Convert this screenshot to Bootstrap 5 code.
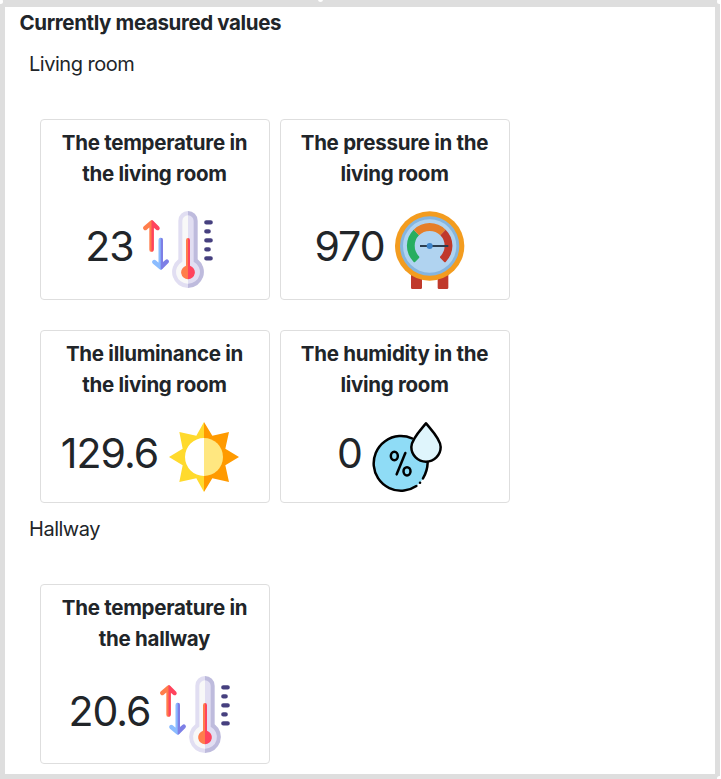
<!DOCTYPE html>
<html lang="en">
<head>
<meta charset="utf-8">
<meta name="viewport" content="width=device-width, initial-scale=1">
<title>Currently measured values</title>
<link href="https://cdn.jsdelivr.net/npm/bootstrap@5.3.0/dist/css/bootstrap.min.css" rel="stylesheet">
<style>
html, body { height: 100%; overflow: hidden; }
body { font-family: Inter, "Liberation Sans", sans-serif; font-size: 20px; line-height: 31px; color: #212529; background: #fff; }
.panel-frame { width: 720px; height: 779px; border: 5px solid #dedede; border-top-width: 7px; position: relative; padding: 0 0 0 15px; }
.handle { position: absolute; width: 5px; height: 5px; border-radius: 50%; background: #fff; }
.handle-tl { left: -7px; top: -8px; }
.handle-tc { left: 313px; top: -10px; }
.handle-tr { right: -7px; top: -8px; }
.handle-br { right: -7px; bottom: -7px; }
.panel-title { font-size: 20.5px; line-height: 31px; letter-spacing: -.37px; margin-left: -.5px; }
.room-name { font-size: 20px; line-height: 31px; margin: 11px 0 0 9px; letter-spacing: -.48px; }
.room-cards { margin: 39px 0 0 20px; column-gap: 10px; row-gap: 30px; }
.sensor { width: 230px; border-color: #dedede; border-radius: 4px; padding-top: 7px; }
.sensor-tall { height: 181px; }
.sensor-short { height: 173px; }
.sensor-last { height: 180px; }
.sensor-title { font-size: 20.5px; line-height: 31px; letter-spacing: -.28px; padding-right: 1px; }
.reading { margin-top: 22px; gap: 11px; padding-right: 10px; }
.reading-value { font-size: 41px; line-height: 70px; letter-spacing: -1px; }
.sensor-short .reading-value { line-height: 62px; }
.icon-thermometer { margin: 0 2px 0 -2px; }
.icon-gauge, .icon-humidity { margin: 0 1px 0 -1px; }
</style>
</head>
<body>
<svg width="0" height="0" class="position-absolute" aria-hidden="true">
  <symbol id="thermometer" viewBox="39 18 210 234">
    <path fill="#e1def2" d="M174 18a29 29 0 0 0-29 29v116a48 48 0 0 0 29 86z"/>
    <path fill="#bebbdd" d="M174 18a29 29 0 0 1 29 29v116a48 48 0 0 1-29 86z"/>
    <path fill="#f8f8f8" d="M174 31a17 17 0 0 0-17 17v122a35 35 0 0 0 17 66z"/>
    <path fill="#e1def2" d="M174 31a17 17 0 0 1 17 17v122a35 35 0 0 1-17 66z"/>
    <path fill="#ff7d4b" d="M174 99q-6 0-6 7v76a21 21 0 0 0 6 41z"/>
    <path fill="#ff435d" d="M174 99q6 0 6 7v76a21 21 0 0 1-6 41z"/>
    <g fill="none" stroke-width="13" stroke-linecap="round" stroke-linejoin="round">
      <path stroke="#ff7d4b" d="M64.500 53V134M64.500 53L46 69"/>
      <path stroke="#8bbcff" d="M92 187V105M92 187L73 171"/>
      <path stroke="#46407f" d="M229 52H242M229 79H236M229 106H242M229 133H236M229 160H242"/>
    </g>
    <path fill="#ff435d" d="M64.500 45q3 0 5 2l18 18q4 5 0 9-4 4-9 0l-7-6v65q0 7-7 7z"/>
    <path fill="#7d7fe6" d="M92 98q7 0 7 7v66l7-6q5-4 9 0 4 5 0 9l-18 18q-2 2-5 2z"/>
  </symbol>
  <symbol id="gauge" viewBox="30 33 210 234">
    <path fill="#c0392b" d="M78 220h33v43q0 4-4 4H82q-4 0-4-4zM158 220h32v43q0 4-4 4h-24q-4 0-4-4z"/>
    <circle cx="134" cy="138" r="104" fill="#f39c1f"/>
    <circle cx="134" cy="138" r="89" fill="#85b5df"/>
    <circle cx="134" cy="138" r="80" fill="#b0d3f0"/>
    <path fill="#27ae60" d="M86 89A68 68 0 0 0 86 186Q88 188 91 185L102 174Q104 172 102 169A45 45 0 0 1 102 106z"/>
    <path fill="#e67e28" d="M86 89A68 68 0 0 1 182 89L166 106A45 45 0 0 0 102 106z"/>
    <path fill="#c0392b" d="M182 89A68 68 0 0 1 182 186Q180 188 177 185L166 174Q164 172 166 169A45 45 0 0 0 166 106z"/>
    <path stroke="#2c3e50" stroke-width="6" d="M105 138H190"/>
    <circle cx="134" cy="138" r="9" fill="#3c83ca"/>
  </symbol>
  <symbol id="sun" viewBox="27 21 210 210">
    <path fill="#ffda2d" d="M132 21L109 62 58 51 68 101 27 126 68 151 58 201 109 190 132 231z"/>
    <path fill="#ff9a00" d="M132 21L157 62 207 51 196 101 237 126 196 151 207 201 157 190 132 231z"/>
    <path fill="#fff" d="M132 69a57 57 0 0 0 0 114z"/>
    <path fill="#ffe780" d="M132 69a57 57 0 0 1 0 114z"/>
  </symbol>
  <symbol id="humidity" viewBox="21 21 210 210">
    <circle cx="107" cy="145" r="82" fill="#8fdcf6"/>
    <g fill="none" stroke="#000" stroke-width="7.500" stroke-linecap="round">
      <path d="M141 70A82 82 0 1 0 154 213M174 190Q187 169 188 143"/>
      <path d="M121 114L95 178"/>
      <ellipse cx="88" cy="123" rx="10.500" ry="12.500"/>
      <ellipse cx="126" cy="169" rx="10.500" ry="12.500"/>
      <path d="M165 203h.1"/>
    </g>
    <path fill="#dff5fc" stroke="#000" stroke-width="7.500" stroke-linejoin="round" d="M183 25C169 43 139 72 139 96A44 44 0 0 0 227 96C227 72 197 43 183 25z"/>
  </symbol>
</svg>
<main class="panel-frame">
  <span class="handle handle-tl"></span><span class="handle handle-tc"></span><span class="handle handle-tr"></span><span class="handle handle-br"></span>
  <h1 class="panel-title fw-bold mb-0">Currently measured values</h1>
  <section>
    <h2 class="room-name fw-normal">Living room</h2>
    <div class="room-cards d-flex flex-wrap">
      <article class="card sensor sensor-tall text-center">
        <h3 class="sensor-title fw-bold mb-0">The temperature in<br>the living room</h3>
        <div class="reading d-flex justify-content-center align-items-start"><span class="reading-value">23</span><svg class="icon-thermometer" width="70" height="78"><use href="#thermometer"/></svg></div>
      </article>
      <article class="card sensor sensor-tall text-center">
        <h3 class="sensor-title fw-bold mb-0">The pressure in the<br>living room</h3>
        <div class="reading d-flex justify-content-center align-items-start"><span class="reading-value">970</span><svg class="icon-gauge" width="70" height="78"><use href="#gauge"/></svg></div>
      </article>
      <article class="card sensor sensor-short text-center">
        <h3 class="sensor-title fw-bold mb-0">The illuminance in<br>the living room</h3>
        <div class="reading d-flex justify-content-center align-items-start"><span class="reading-value">129.6</span><svg width="70" height="70"><use href="#sun"/></svg></div>
      </article>
      <article class="card sensor sensor-short text-center">
        <h3 class="sensor-title fw-bold mb-0">The humidity in the<br>living room</h3>
        <div class="reading d-flex justify-content-center align-items-start"><span class="reading-value">0</span><svg class="icon-humidity" width="70" height="70"><use href="#humidity"/></svg></div>
      </article>
    </div>
  </section>
  <section>
    <h2 class="room-name fw-normal">Hallway</h2>
    <div class="room-cards d-flex flex-wrap">
      <article class="card sensor sensor-last text-center">
        <h3 class="sensor-title fw-bold mb-0">The temperature in<br>the hallway</h3>
        <div class="reading d-flex justify-content-center align-items-start"><span class="reading-value">20.6</span><svg class="icon-thermometer" width="70" height="78"><use href="#thermometer"/></svg></div>
      </article>
    </div>
  </section>
</main>
<script src="https://cdn.jsdelivr.net/npm/bootstrap@5.3.0/dist/js/bootstrap.bundle.min.js"></script>
</body>
</html>
